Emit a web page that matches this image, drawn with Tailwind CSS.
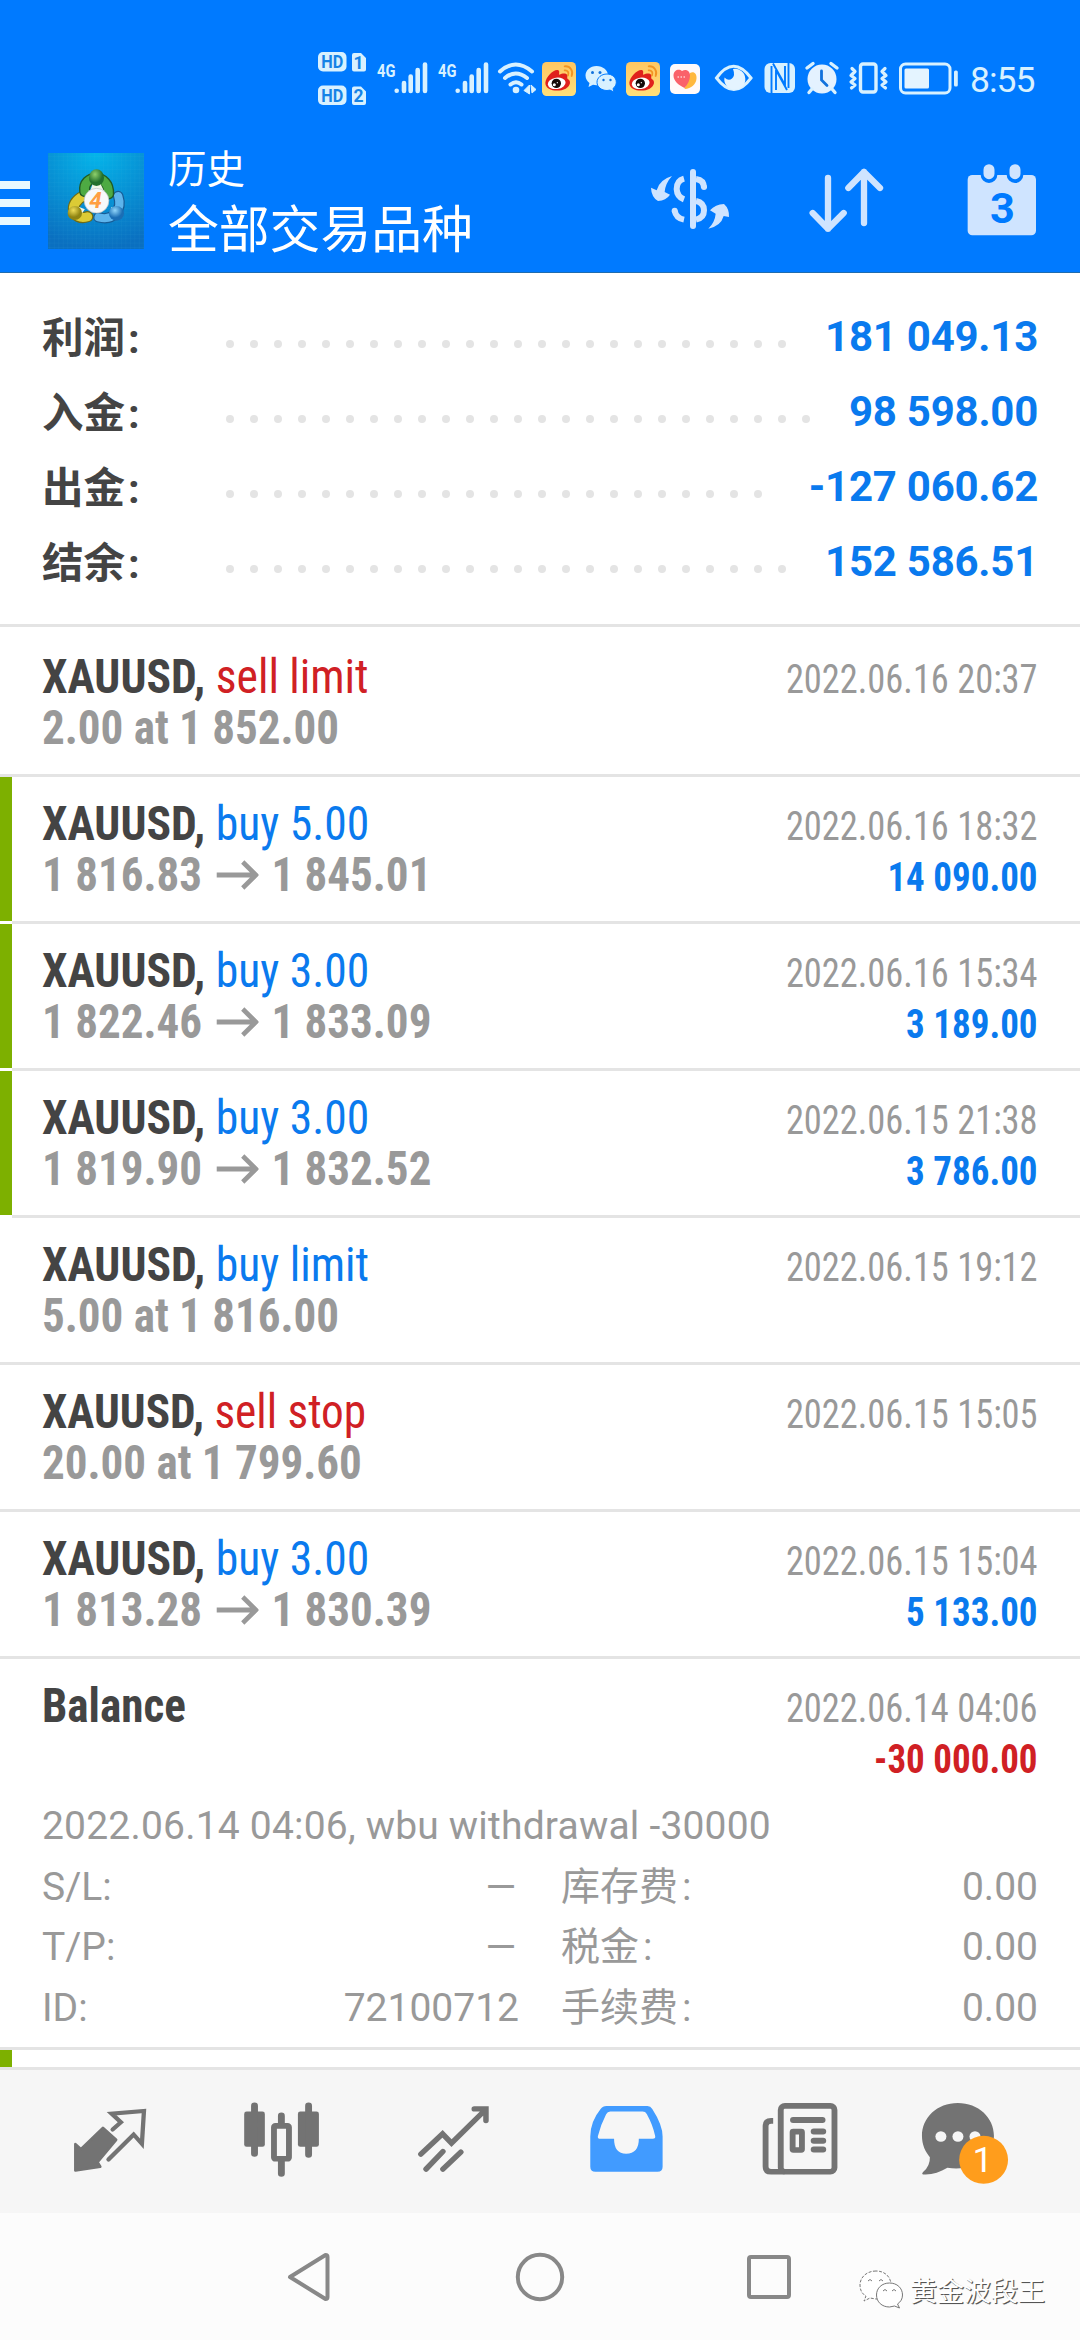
<!DOCTYPE html>
<html lang="zh-CN">
<head>
<meta charset="utf-8">
<title>历史</title>
<script src="https://cdn.jsdelivr.net/npm/@tailwindcss/browser@4"></script>
</head>
<body class="w-[1080px] h-[2340px] overflow-hidden bg-white font-['Roboto','Noto_Sans_CJK_SC',sans-serif] text-[#999]">
<svg class="absolute size-0">
  <defs><linearGradient id="wg" x1="0" y1="0" x2="0" y2="1"><stop offset="0" stop-color="#ffc763"/><stop offset="1" stop-color="#ffe07a"/></linearGradient></defs>
  <symbol id="weibo" viewBox="0 0 102 102">
    <rect width="102" height="102" rx="14" fill="url(#wg)"/>
    <path d="M10 62C12 44 34 22 47 24C55 26 50 36 52 38C60 34 74 32 76 40C77 44 74 48 77 51C88 56 86 72 71 80C50 91 10 87 10 62Z" fill="#e0201c"/>
    <ellipse cx="44" cy="64" rx="27" ry="17" fill="#fff" transform="rotate(-8 44 64)"/>
    <circle cx="43" cy="64" r="14" fill="#140a08"/><circle cx="37" cy="68" r="4.500" fill="#fff"/><circle cx="46" cy="62" r="2" fill="#fff"/>
    <path d="M68 13C84 11 95 26 89 42M68 25C77 24 82 32 78 40" fill="none" stroke="#f29422" stroke-width="5.500" stroke-linecap="round"/>
  </symbol>
</svg>
<header class="h-[273px] bg-[#007aff] border-b border-[#1f6cae]">
  <div class="h-[120px] flex pl-[310px]">
    <svg class="w-[65px] h-[120px]" viewBox="310 0 65 120">
      <g fill="#d8f1ff"><rect x="318" y="52" width="28.500" height="19.500" rx="5"/><rect x="318" y="85.500" width="28.500" height="19.500" rx="5"/>
      <path d="M354 53h7l5 5v11.500a2 2 0 0 1-2 2h-10a2 2 0 0 1-2-2v-14.500a2 2 0 0 1 2-2zM354 86.500h7l5 5v11.500a2 2 0 0 1-2 2h-10a2 2 0 0 1-2-2v-14.500a2 2 0 0 1 2-2z"/></g>
      <g fill="#1583e6" class="font-['Roboto'] font-bold" font-size="17.500" text-anchor="middle"><text x="332.300" y="68" textLength="22" lengthAdjust="spacingAndGlyphs">HD</text><text x="332.300" y="101.500" textLength="22" lengthAdjust="spacingAndGlyphs">HD</text><text x="358.500" y="68.500">1</text><text x="358.500" y="102">2</text></g>
    </svg>
    <svg class="w-[61px] h-[120px]" viewBox="375 0 61 120"><text x="377" y="76.500" class="font-['Roboto'] font-bold" font-size="18.500" fill="#d8f1ff" textLength="18.500" lengthAdjust="spacingAndGlyphs">4G</text><path d="M396.700 90.700v.1M404 83v8M410.700 76.500v14.500M417.700 70v21M425 64.500v26.500" stroke="#d8f1ff" stroke-width="4.600" stroke-linecap="round"/></svg>
    <svg class="w-[61px] h-[120px]" viewBox="375 0 61 120"><text x="377" y="76.500" class="font-['Roboto'] font-bold" font-size="18.500" fill="#d8f1ff" textLength="18.500" lengthAdjust="spacingAndGlyphs">4G</text><path d="M396.700 90.700v.1M404 83v8M410.700 76.500v14.500M417.700 70v21M425 64.500v26.500" stroke="#d8f1ff" stroke-width="4.600" stroke-linecap="round"/></svg>
    <svg class="w-[45px] h-[120px]" viewBox="497 0 45 120"><path d="M500 71.500Q515.500 57.500 532 71.500M505 78Q515.500 69 527 78M510.500 84.500Q516 80 521.500 84.500" fill="none" stroke="#d8f1ff" stroke-width="4" stroke-linecap="round"/><circle cx="516" cy="90" r="3.300" fill="#d8f1ff"/><path d="M529.500 85v9l-5.500-3.500zM531 85l5 4.500-4 3.500z" fill="#d8f1ff" stroke="#d8f1ff"/></svg>
    <svg class="mt-[62px] size-[34px]"><use href="#weibo"/></svg>
    <svg class="w-[50px] h-[120px]" viewBox="576 0 50 120"><path d="M596.500 66c-6.500 0-11 4.500-11 9.500 0 3.500 2 6 4 7.500l-1 4 4.500-2.300 3.500.5c6.500 0 11.500-4.500 11.500-9.700s-5-9.500-11.500-9.500z" fill="#d8f1ff"/><path d="M607 74c-5.600 0-10 3.700-10 8.300s4.400 8.200 10 8.200l3-.4 4 2-1-3.600c2-1.500 3.300-3.600 3.300-6.200 0-4.600-4-8.300-9.300-8.300z" fill="#d8f1ff" stroke="#007aff"/><g fill="#1272dc"><circle cx="592.500" cy="72.500" r="1.500"/><circle cx="600" cy="72.500" r="1.500"/><circle cx="603.500" cy="80" r="1.200"/><circle cx="610.500" cy="80" r="1.200"/></g></svg>
    <svg class="mt-[62px] size-[34px]"><use href="#weibo"/></svg>
    <svg class="w-[48px] h-[120px]" viewBox="660 0 48 120"><rect x="670" y="64" width="30" height="30" rx="5" fill="#fffafa"/><path d="M690 73c4-2 7 1 6.500 5.500-.5 6-5 10-12 10.500z" fill="#ffb83d"/><path d="M684.500 88c-6-3-11-7-11-12.500 0-6 6-7 8.500-4.500 4-2.500 8 0 8 4.500s-2 8.500-5.500 12.500z" fill="#fa626a"/><path d="M677.500 77h8" stroke="#fff" stroke-width="1.200" stroke-dasharray="1.500 1.500"/></svg>
    <svg class="w-[52px] h-[120px]" viewBox="708 0 52 120"><path d="M716.500 78Q733.500 54.500 751 78Q734 101 716.500 78Z" fill="none" stroke="#d8f1ff" stroke-width="3"/><path d="M733 69a10.500 10.500 0 1 1-8.500 8.500q4 4 7.500 1t1-9.500z" fill="#e4f4ff"/></svg>
    <svg class="w-[42px] h-[120px]" viewBox="760 0 42 120"><rect x="764.500" y="63" width="30.500" height="30" rx="6" fill="#d8f1ff"/><path d="M771.500 66v27M776 90V70L787 90M773 63.500l12 21.500V66M788.500 63v25" fill="none" stroke="#007aff" stroke-width="1.900"/></svg>
    <svg class="w-[42px] h-[120px]" viewBox="802 0 42 120"><circle cx="822" cy="79" r="14.500" fill="#e4f2ff"/><path d="M807 68l6-4.500M837 68l-6-4.500M812 89l-3 3.500M832 89l3 3.500" stroke="#d8f1ff" stroke-width="3.400" stroke-linecap="round"/><path d="M821.500 71v9l5.500 5.500" fill="none" stroke="#1272dc" stroke-width="2.800" stroke-linecap="round"/></svg>
    <svg class="w-[50px] h-[120px]" viewBox="844 0 50 120"><rect x="860.500" y="64" width="15.500" height="28" rx="2.500" fill="none" stroke="#d8f1ff" stroke-width="3.400"/><path d="M852 68.500l3 3-4 4 4 3-4 3.500 4 3-3.500 3M885 68.500l-3 3 4 4-4 3 4 3.500-4 3 3.500 3" fill="none" stroke="#d8f1ff" stroke-width="3.200" stroke-linecap="round" stroke-linejoin="round"/></svg>
    <svg class="w-[76px] h-[120px]" viewBox="894 0 76 120"><rect x="900.500" y="64" width="49.500" height="29" rx="5" fill="none" stroke="#d8f1ff" stroke-width="3"/><rect x="904.500" y="68.500" width="24.500" height="20" rx="1.500" fill="#e4f4ff"/><rect x="954" y="70.500" width="3.800" height="16" rx="1.500" fill="#d8f1ff"/></svg>
    <svg class="w-[80px] h-[120px]" viewBox="970 0 80 120"><text x="970" y="92" class="font-['Roboto']" font-size="35.500" fill="#d8f1ff" textLength="65.500">8:55</text></svg>
  </div>
  <div class="h-[152px] flex">
    <svg class="w-[48px] h-[152px]" viewBox="0 120 48 152"><path d="M0 185h30M0 203h30M0 221h30" stroke="#e8f8ff" stroke-width="8"/></svg>
    <svg class="mt-[33px] size-[96px]" viewBox="139 69 279 288" preserveAspectRatio="none">
      <defs><radialGradient id="lg" cx=".5" cy="0" r="1"><stop offset="0" stop-color="#04b5ea"/><stop offset="1" stop-color="#0a6fc0"/></radialGradient>
      <pattern id="gr" width="13" height="13" patternUnits="userSpaceOnUse"><path d="M0 0H13M0 0V13" stroke="#4cc4e8" stroke-opacity=".16" stroke-width="2"/></pattern>
      <radialGradient id="gn" cx=".4" cy=".3"><stop offset="0" stop-color="#8ed06c"/><stop offset="1" stop-color="#23702d"/></radialGradient>
      <radialGradient id="yl" cx=".4" cy=".3"><stop offset="0" stop-color="#f0de58"/><stop offset="1" stop-color="#8f8412"/></radialGradient>
      <radialGradient id="bl" cx=".4" cy=".3"><stop offset="0" stop-color="#90d5fa"/><stop offset="1" stop-color="#1a6eb5"/></radialGradient></defs>
      <rect x="139" y="69" width="279" height="288" fill="url(#lg)"/><rect x="139" y="69" width="279" height="288" fill="url(#gr)"/>
      <g fill="none" stroke-linecap="round">
      <path d="M343 198C356 238 330 274 286 262" stroke="#175c96" stroke-width="31"/><path d="M343 198C356 238 330 274 286 262" stroke="#5db4ec" stroke-width="24"/>
      <path d="M254 260C212 274 194 222 242 198" stroke="#6d6b16" stroke-width="34"/><path d="M254 260C212 274 194 222 242 198" stroke="#dccb35" stroke-width="27"/>
      <path d="M246 185C238 132 318 128 315 192" stroke="#205c24" stroke-width="33"/><path d="M246 185C238 132 318 128 315 192" stroke="#4eaa43" stroke-width="25"/></g>
      <path d="M262 182l8-24h20l12 26zM228 230l18 8-12 18zM322 232l14 4-10 12z" fill="#f2f7e7"/>
      <ellipse cx="280" cy="143" rx="22" ry="25" fill="url(#gn)"/><circle cx="217" cy="249" r="21" fill="url(#yl)"/><circle cx="338" cy="250" r="22" fill="url(#bl)"/>
      <ellipse cx="280" cy="212" rx="36" ry="37" fill="#f7f9fa" stroke="#b6bfc4" stroke-width="2"/>
      <text x="277" y="233" font-size="66" text-anchor="middle" fill="#ff9f43" class="font-['Roboto'] font-bold italic">4</text>
    </svg>
    <div class="ml-[24px] w-[431px] text-white">
      <div class="mt-[23px] h-[54px] leading-[54px] text-[38.500px]">历史</div>
      <div class="h-[66px] leading-[67px] text-[50.800px]">全部交易品种</div>
    </div>
    <svg class="w-[161px] h-[152px]" viewBox="-3 -30 483 456">
      <g fill="#cfe4ff">
      <path d="M153 173l17 8q8-32 46-43q-20 22-22 48l16 8q-12 18-36 19q-20-12-21-40z"/>
      <path d="M387 261l-16-3q-8 30-46 38q20-20 22-45l-17-10q16-18 42-19q16 14 15 39z"/></g>
      <g fill="none" stroke="#cfe4ff" stroke-width="18"><path d="M279 126v162" stroke-linecap="round"/><path d="M252 146Q230 152 230 177Q231 200 252 208M224 242Q228 264 252 269"/><path d="M288 147Q312 150 312 174"/><path d="M288 213Q312 218 312 241Q312 264 288 269"/></g>
      <circle cx="312" cy="171" r="9" fill="#cfe4ff"/><circle cx="224" cy="242" r="9" fill="#cfe4ff"/>
    </svg>
    <svg class="w-[140px] h-[152px]" viewBox="480 -30 420 456"><path d="M684 144V296M638 249L684 296L731 249M792 279V126M745 174L792 126L840 174" fill="none" stroke="#cfe4ff" stroke-width="19" stroke-linecap="round" stroke-linejoin="round"/></svg>
    <svg class="w-[180px] h-[152px]" viewBox="900 -30 540 456"><rect x="1103" y="135" width="205" height="181" rx="14" fill="#cfe4ff"/><path d="M1167 120v14M1245 120v14" stroke="#007aff" stroke-width="50" stroke-linecap="round"/><path d="M1167 119v12M1245 119v12" stroke="#cfe4ff" stroke-width="33" stroke-linecap="round"/><text x="1207" y="278" text-anchor="middle" font-size="130" fill="#007aff" class="font-['Roboto'] font-bold">3</text></svg>
  </div>
</header>
<main class="h-[1794px] overflow-hidden">
  <section class="h-[354px] pt-[26px] px-[42px] border-b-3 border-[#e4e4e4] text-[42px] leading-[75px] font-bold text-[#444]">
    <div class="flex h-[75px]"><span class="pt-[2px] w-[184px] text-[41.500px]">利润<span class="ml-[3px]">:</span></span><svg class="w-[576px] h-[75px]"><path d="M4 45H575" stroke="#e4e4e4" stroke-width="8" stroke-linecap="round" stroke-dasharray="0 24"/></svg><span class="ml-auto tracking-[-0.25px] text-[#0a7aee]">181 049.13</span></div>
    <div class="flex h-[75px]"><span class="pt-[2px] w-[184px] text-[41.500px]">入金<span class="ml-[3px]">:</span></span><svg class="w-[600px] h-[75px]"><path d="M4 45H599" stroke="#e4e4e4" stroke-width="8" stroke-linecap="round" stroke-dasharray="0 24"/></svg><span class="ml-auto tracking-[-0.25px] text-[#0a7aee]">98 598.00</span></div>
    <div class="flex h-[75px]"><span class="pt-[2px] w-[184px] text-[41.500px]">出金<span class="ml-[3px]">:</span></span><svg class="w-[552px] h-[75px]"><path d="M4 45H551" stroke="#e4e4e4" stroke-width="8" stroke-linecap="round" stroke-dasharray="0 24"/></svg><span class="ml-auto tracking-[-0.25px] text-[#0a7aee]">-127 060.62</span></div>
    <div class="flex h-[75px]"><span class="pt-[2px] w-[184px] text-[41.500px]">结余<span class="ml-[3px]">:</span></span><svg class="w-[576px] h-[75px]"><path d="M4 45H575" stroke="#e4e4e4" stroke-width="8" stroke-linecap="round" stroke-dasharray="0 24"/></svg><span class="ml-auto tracking-[-0.25px] text-[#0a7aee]">152 586.51</span></div>
  </section>
  <div class="pt-[3px] font-stretch-75% text-[48px] leading-[51px]">
    <div class="h-[147px] pt-[21px] px-[42px] flex justify-between border-b-3 border-[#e4e4e4]">
      <div class="font-bold"><div class="origin-left scale-x-[.95] text-[#444]">XAUUSD, <span class="font-normal text-[#d02024]">sell limit</span></div><div class="origin-left scale-x-[.938]">2.00 at 1 852.00</div></div>
      <div class="pt-[3px] text-right text-[40px]"><div class="origin-right scale-x-[.91]">2022.06.16 20:37</div></div>
    </div>
    <div class="h-[147px] flex"><div class="w-3 h-[144px] bg-[#7db000]"></div><div class="grow pt-[21px] pl-[30px] pr-[42px] flex justify-between border-b-3 border-[#e4e4e4]">
      <div class="font-bold"><div class="origin-left scale-x-[.95] text-[#444]">XAUUSD, <span class="font-normal text-[#0a7aee]">buy 5.00</span></div><div class="flex items-center origin-left scale-x-[.938]">1 816.83<svg class="ml-[15px] mr-[14px] w-[45px] h-[30px]" viewBox="0 0 45 30"><path d="M0 15H42M28 2L42 15L28 28" fill="none" stroke="#999" stroke-width="5"/></svg>1 845.01</div></div>
      <div class="pt-[3px] text-right text-[40px]"><div class="origin-right scale-x-[.91]">2022.06.16 18:32</div><div class="origin-right scale-x-[.925] font-bold text-[#0a7aee]">14 090.00</div></div>
    </div></div>
    <div class="h-[147px] flex"><div class="w-3 h-[144px] bg-[#7db000]"></div><div class="grow pt-[21px] pl-[30px] pr-[42px] flex justify-between border-b-3 border-[#e4e4e4]">
      <div class="font-bold"><div class="origin-left scale-x-[.95] text-[#444]">XAUUSD, <span class="font-normal text-[#0a7aee]">buy 3.00</span></div><div class="flex items-center origin-left scale-x-[.938]">1 822.46<svg class="ml-[15px] mr-[14px] w-[45px] h-[30px]" viewBox="0 0 45 30"><path d="M0 15H42M28 2L42 15L28 28" fill="none" stroke="#999" stroke-width="5"/></svg>1 833.09</div></div>
      <div class="pt-[3px] text-right text-[40px]"><div class="origin-right scale-x-[.91]">2022.06.16 15:34</div><div class="origin-right scale-x-[.925] font-bold text-[#0a7aee]">3 189.00</div></div>
    </div></div>
    <div class="h-[147px] flex"><div class="w-3 h-[144px] bg-[#7db000]"></div><div class="grow pt-[21px] pl-[30px] pr-[42px] flex justify-between border-b-3 border-[#e4e4e4]">
      <div class="font-bold"><div class="origin-left scale-x-[.95] text-[#444]">XAUUSD, <span class="font-normal text-[#0a7aee]">buy 3.00</span></div><div class="flex items-center origin-left scale-x-[.938]">1 819.90<svg class="ml-[15px] mr-[14px] w-[45px] h-[30px]" viewBox="0 0 45 30"><path d="M0 15H42M28 2L42 15L28 28" fill="none" stroke="#999" stroke-width="5"/></svg>1 832.52</div></div>
      <div class="pt-[3px] text-right text-[40px]"><div class="origin-right scale-x-[.91]">2022.06.15 21:38</div><div class="origin-right scale-x-[.925] font-bold text-[#0a7aee]">3 786.00</div></div>
    </div></div>
    <div class="h-[147px] pt-[21px] px-[42px] flex justify-between border-b-3 border-[#e4e4e4]">
      <div class="font-bold"><div class="origin-left scale-x-[.95] text-[#444]">XAUUSD, <span class="font-normal text-[#0a7aee]">buy limit</span></div><div class="origin-left scale-x-[.938]">5.00 at 1 816.00</div></div>
      <div class="pt-[3px] text-right text-[40px]"><div class="origin-right scale-x-[.91]">2022.06.15 19:12</div></div>
    </div>
    <div class="h-[147px] pt-[21px] px-[42px] flex justify-between border-b-3 border-[#e4e4e4]">
      <div class="font-bold"><div class="origin-left scale-x-[.943] text-[#444]">XAUUSD, <span class="font-normal text-[#d02024]">sell stop</span></div><div class="origin-left scale-x-[.938]">20.00 at 1 799.60</div></div>
      <div class="pt-[3px] text-right text-[40px]"><div class="origin-right scale-x-[.91]">2022.06.15 15:05</div></div>
    </div>
    <div class="h-[147px] pt-[21px] px-[42px] flex justify-between border-b-3 border-[#e4e4e4]">
      <div class="font-bold"><div class="origin-left scale-x-[.95] text-[#444]">XAUUSD, <span class="font-normal text-[#0a7aee]">buy 3.00</span></div><div class="flex items-center origin-left scale-x-[.938]">1 813.28<svg class="ml-[15px] mr-[14px] w-[45px] h-[30px]" viewBox="0 0 45 30"><path d="M0 15H42M28 2L42 15L28 28" fill="none" stroke="#999" stroke-width="5"/></svg>1 830.39</div></div>
      <div class="pt-[3px] text-right text-[40px]"><div class="origin-right scale-x-[.91]">2022.06.15 15:04</div><div class="origin-right scale-x-[.925] font-bold text-[#0a7aee]">5 133.00</div></div>
    </div>
    <div class="h-[391px] pt-[21px] px-[42px] border-b-3 border-[#e4e4e4]">
      <div class="h-[116px] flex justify-between">
        <div class="origin-left scale-x-[.94] font-bold text-[#444]">Balance</div>
        <div class="pt-[3px] text-right text-[40px]"><div class="origin-right scale-x-[.91]">2022.06.14 04:06</div><div class="origin-right scale-x-[.925] font-bold text-[#d02024]">-30 000.00</div></div>
      </div>
      <div class="font-stretch-100% text-[39px] leading-[60.500px]">
        <div class="tracking-[0.200px]">2022.06.14 04:06, wbu withdrawal -30000</div>
        <div class="grid grid-cols-[477px_1fr] gap-x-[42px]">
          <div class="flex justify-between"><span>S/L:</span><span class="origin-right scale-x-[1.350]">–</span></div><div class="flex justify-between"><span>库存费<span class="ml-1">:</span></span><span>0.00</span></div>
          <div class="flex justify-between"><span>T/P:</span><span class="origin-right scale-x-[1.350]">–</span></div><div class="flex justify-between"><span>税金<span class="ml-1">:</span></span><span>0.00</span></div>
          <div class="flex justify-between"><span>ID:</span><span>72100712</span></div><div class="flex justify-between"><span>手续费<span class="ml-1">:</span></span><span>0.00</span></div>
        </div>
      </div>
    </div>
    <div class="w-3 h-[17px] bg-[#7db000]"></div>
  </div>
</main>
<nav class="h-[146px] px-[24px] flex border-t-3 border-[#e4e4e4] bg-[#f6f6f6]">
  <svg class="w-[172px] h-[143px]" viewBox="69.700 90 499.400 430" preserveAspectRatio="none"><path d="M299 264L337 300L283 367L291 381L219 392V313L235 328Z" fill="#737373" stroke="#737373" stroke-width="8" stroke-linejoin="round"/><path d="M327 269L351 247L324 221L418 213L412 312L388 284L315 359" fill="none" stroke="#737373" stroke-width="12.500" stroke-linecap="round"/></svg>
  <svg class="w-[172px] h-[143px]" viewBox="569.100 90 499.400 430" preserveAspectRatio="none"><g fill="#737373"><rect x="709" y="215" width="60" height="106" rx="7"/><rect x="865" y="215" width="61" height="106" rx="7"/></g><path d="M739 198v143M896 198v146M817 228v22M817 360v41" stroke="#737373" stroke-width="20" stroke-linecap="round"/><rect x="795.500" y="258" width="43.500" height="99" rx="4" fill="#f6f6f6" stroke="#737373" stroke-width="17"/></svg>
  <svg class="w-[172px] h-[143px]" viewBox="1068.500 90 499.400 430" preserveAspectRatio="none"><path d="M1222 343L1285 282L1311 310L1408 211M1377 207H1411V242M1237 388L1286 335M1286 388L1338 337" fill="none" stroke="#737373" stroke-width="16" stroke-linecap="round"/></svg>
  <svg class="w-[172px] h-[143px]" viewBox="0 90 499.400 430" preserveAspectRatio="none"><path fill-rule="evenodd" d="M193 198H312Q321 198 326 207Q356 255 356 290V381Q356 396 341 396H161Q146 396 146 381V290Q146 245 176 207Q182 198 193 198ZM204 215Q196 215 192 223Q176 255 168 289Q167 297 175 297H215Q215 342 250 342Q287 342 287 297H327Q337 297 334 287Q328 256 310 222Q306 215 298 215Z" fill="#419bff"/></svg>
  <svg class="w-[172px] h-[143px]" viewBox="499.400 90 499.400 430" preserveAspectRatio="none"><g fill="none" stroke="#737373"><rect x="699" y="198" width="156" height="198" rx="12" stroke-width="17"/><path d="M677 243H671Q655 243 655 258V380Q655 396 671 396H710" stroke-width="17"/><path d="M735 240H820M795 275H822M795 303H822M795 329H822" stroke-width="18" stroke-linecap="round"/><rect x="733.500" y="275.500" width="27" height="55" rx="2" stroke-width="17"/></g></svg>
  <svg class="w-[172px] h-[143px]" viewBox="998.800 90 499.400 430" preserveAspectRatio="none"><path d="M1213 189C1273 189 1318 233 1318 288C1318 350 1260 397 1183 384C1160 398 1137 406 1112 404Q1107 403 1113 396Q1133 377 1132 352C1119 337 1109 315 1109 288C1109 233 1153 189 1213 189Z" fill="#737373"/><g fill="#f6f6f6"><circle cx="1164" cy="290" r="16"/><circle cx="1213.500" cy="290" r="16"/><circle cx="1263" cy="290" r="16"/></g><ellipse cx="1288" cy="360" rx="71" ry="72" fill="#ff9d1c"/><text x="1285" y="396" text-anchor="middle" font-size="105" fill="#fff" class="font-['Roboto']">1</text></svg>
</nav>
<footer class="h-[127px] flex bg-[#fcfcfc]">
  <svg class="ml-[228px] w-[160px] h-[127px]" viewBox="228 2213 160 127"><path d="M290 2277L325.500 2255Q327.500 2255 327.500 2257V2297Q327.500 2299 325.500 2299Z" fill="none" stroke="#888" stroke-width="4" stroke-linejoin="round"/></svg>
  <svg class="w-[304px] h-[127px]" viewBox="388 2213 304 127"><circle cx="540" cy="2277" r="22.200" fill="none" stroke="#888" stroke-width="4"/></svg>
  <svg class="w-[158px] h-[127px]" viewBox="692 2213 158 127"><rect x="749" y="2257" width="40" height="40" rx="2" fill="none" stroke="#888" stroke-width="4"/></svg>
  <svg class="w-[60px] h-[127px]" viewBox="850 2213 60 127"><g fill="#fff" stroke="#777" stroke-width="1"><path d="M876 2271c-9 0-16 6-16 14 0 5 2 9 6 11l-2 5 6-3 6 1c9 0 15-6 15-14s-6-14-15-14z" stroke-dasharray="3 1.500"/><path d="M889.500 2283c-7.500 0-13 5-13 12s5.500 12 13 12l5-1 5 2-2-4c3-2 5-5 5-9 0-7-5.500-12-13-12z"/><path d="M868 2281q2-3 4 0M879 2281q2-3 4 0M883 2291q2-3 4 0M892 2291q2-3 4 0" fill="none"/></g></svg>
  <div class="mt-[59px] text-[27px] leading-[40px] text-white [text-shadow:1px_1px_0_#555,1px_1px_1px_#888]">黄金波段王</div>
</footer>
</body>
</html>
